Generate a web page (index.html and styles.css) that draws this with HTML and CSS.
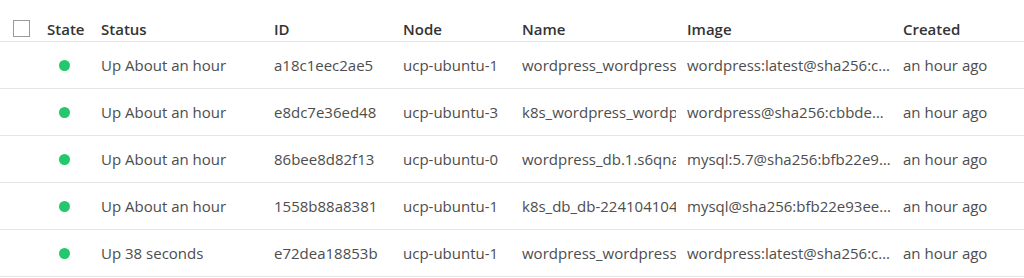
FILE: index.html
```html
<!DOCTYPE html>
<html>
<head>
<meta charset="utf-8">
<link rel="stylesheet" href="styles.css">
</head>
<body>
<div class="table">
  <div class="row head">
    <div class="cell check"><span class="box"></span></div>
    <div class="cell">State</div>
    <div class="cell">Status</div>
    <div class="cell">ID</div>
    <div class="cell">Node</div>
    <div class="cell">Name</div>
    <div class="cell">Image</div>
    <div class="cell">Created</div>
  </div>
  <div class="row">
    <div class="cell check"></div>
    <div class="cell"><span class="dot"></span></div>
    <div class="cell">Up About an hour</div>
    <div class="cell">a18c1eec2ae5</div>
    <div class="cell">ucp-ubuntu-1</div>
    <div class="cell clip">wordpress_wordpress.1.x7v2qk9m3n</div>
    <div class="cell ell">wordpress:latest@sha256:cbbde82f4a1</div>
    <div class="cell">an hour ago</div>
  </div>
  <div class="row">
    <div class="cell check"></div>
    <div class="cell"><span class="dot"></span></div>
    <div class="cell">Up About an hour</div>
    <div class="cell">e8dc7e36ed48</div>
    <div class="cell">ucp-ubuntu-3</div>
    <div class="cell clip">k8s_wordpress_wordpress-5d8f</div>
    <div class="cell ell">wordpress@sha256:cbbde82f4a1e9</div>
    <div class="cell">an hour ago</div>
  </div>
  <div class="row">
    <div class="cell check"></div>
    <div class="cell"><span class="dot"></span></div>
    <div class="cell">Up About an hour</div>
    <div class="cell">86bee8d82f13</div>
    <div class="cell">ucp-ubuntu-0</div>
    <div class="cell clip">wordpress_db.1.s6qnaz83kd</div>
    <div class="cell ell">mysql:5.7@sha256:bfb22e93ee87c</div>
    <div class="cell">an hour ago</div>
  </div>
  <div class="row">
    <div class="cell check"></div>
    <div class="cell"><span class="dot"></span></div>
    <div class="cell">Up About an hour</div>
    <div class="cell">1558b88a8381</div>
    <div class="cell">ucp-ubuntu-1</div>
    <div class="cell clip">k8s_db_db-2241041045-x</div>
    <div class="cell ell">mysql@sha256:bfb22e93ee87c1d</div>
    <div class="cell">an hour ago</div>
  </div>
  <div class="row">
    <div class="cell check"></div>
    <div class="cell"><span class="dot"></span></div>
    <div class="cell">Up 38 seconds</div>
    <div class="cell">e72dea18853b</div>
    <div class="cell">ucp-ubuntu-1</div>
    <div class="cell clip">wordpress_wordpress.2.k3m8</div>
    <div class="cell ell">wordpress:latest@sha256:cbbde82f4a1</div>
    <div class="cell">an hour ago</div>
  </div>
</div>
</body>
</html>
```
FILE: styles.css
```css
html, body {
  margin: 0;
  padding: 0;
  background: #fff;
}
body {
  font-family: "Open Sans", "Liberation Sans", sans-serif;
  font-size: 15px;
  color: #4d4d4d;
}
.table {
  display: flex;
  flex-direction: column;
}
.row {
  display: grid;
  grid-template-columns: 47px 54px 173px 129px 119px 165px 216px 1fr;
  height: 47px;
  align-items: center;
  border-bottom: 1px solid #e6e6e6;
  box-sizing: border-box;
}
.row.head {
  height: 42px;
  padding-top: 16px;
  color: #333;
  font-weight: 600;
}
.cell {
  margin-right: 11px;
  white-space: nowrap;
  overflow: hidden;
  min-width: 0;
}
.cell.clip {
  text-overflow: clip;
}
.cell.ell {
  text-overflow: ellipsis;
}
.cell.check {
  padding-left: 13px;
  display: flex;
  align-items: center;
}
.box {
  display: block;
  width: 17px;
  height: 17px;
  border: 1px solid #9a9a9a;
  box-sizing: border-box;
  background: #fff;
}
.dot {
  display: block;
  width: 11px;
  height: 11px;
  border-radius: 50%;
  background: #22c86b;
  margin-left: 12px;
}
```
